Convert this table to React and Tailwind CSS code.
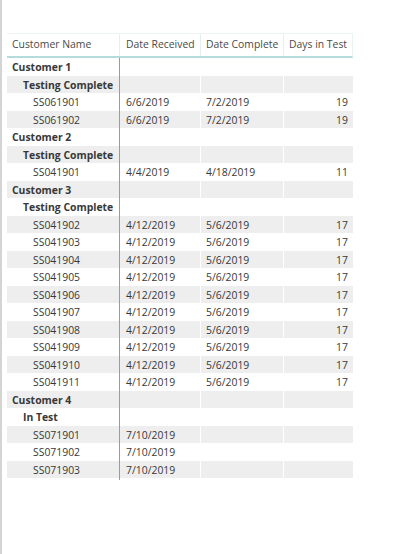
const rows = [
  { level: 0, name: 'Customer 1' },
  { level: 1, name: 'Testing Complete' },
  { level: 2, name: 'SS061901', received: '6/6/2019', complete: '7/2/2019', days: '19' },
  { level: 2, name: 'SS061902', received: '6/6/2019', complete: '7/2/2019', days: '19' },
  { level: 0, name: 'Customer 2' },
  { level: 1, name: 'Testing Complete' },
  { level: 2, name: 'SS041901', received: '4/4/2019', complete: '4/18/2019', days: '11' },
  { level: 0, name: 'Customer 3' },
  { level: 1, name: 'Testing Complete' },
  { level: 2, name: 'SS041902', received: '4/12/2019', complete: '5/6/2019', days: '17' },
  { level: 2, name: 'SS041903', received: '4/12/2019', complete: '5/6/2019', days: '17' },
  { level: 2, name: 'SS041904', received: '4/12/2019', complete: '5/6/2019', days: '17' },
  { level: 2, name: 'SS041905', received: '4/12/2019', complete: '5/6/2019', days: '17' },
  { level: 2, name: 'SS041906', received: '4/12/2019', complete: '5/6/2019', days: '17' },
  { level: 2, name: 'SS041907', received: '4/12/2019', complete: '5/6/2019', days: '17' },
  { level: 2, name: 'SS041908', received: '4/12/2019', complete: '5/6/2019', days: '17' },
  { level: 2, name: 'SS041909', received: '4/12/2019', complete: '5/6/2019', days: '17' },
  { level: 2, name: 'SS041910', received: '4/12/2019', complete: '5/6/2019', days: '17' },
  { level: 2, name: 'SS041911', received: '4/12/2019', complete: '5/6/2019', days: '17' },
  { level: 0, name: 'Customer 4' },
  { level: 1, name: 'In Test' },
  { level: 2, name: 'SS071901', received: '7/10/2019' },
  { level: 2, name: 'SS071902', received: '7/10/2019' },
  { level: 2, name: 'SS071903', received: '7/10/2019' },
]

const indent = ['pl-[5px] font-bold', 'pl-[16px] font-bold', 'pl-[26px]']

export default function App() {
  return (
    <div
      className="h-[554px] w-[405px] bg-white border-l-2 border-[#d4d4d4] pt-[33px] pl-[5px] text-[10.4px] text-[#383838]"
      style={{ fontFamily: '"Open Sans", "Noto Sans", sans-serif' }}
    >
      <div className="w-[346px]">
        {/* Header */}
        <div className="grid grid-cols-[113px_81px_83px_69px] h-[25px] border-t border-r border-[#ebf3f3] border-b-2 border-b-[#b5dcdc] text-[#4a4a4a]">
          <div className="flex items-center pl-[5px] border-r border-[#e6f0f0]">Customer Name</div>
          <div className="flex items-center pl-[6px] border-r border-[#e6f0f0]">Date Received</div>
          <div className="flex items-center pl-[5px] border-r border-[#e6f0f0]">Date Complete</div>
          <div className="flex items-center pl-[5px]">Days in Test</div>
        </div>

        {/* Rows */}
        {rows.map((row, i) => (
          <div
            key={i}
            className={`grid grid-cols-[113px_81px_83px_69px] h-[17.5px] leading-[19px] ${
              i % 2 === 1 ? 'bg-[#eeeeee]' : 'bg-white'
            }`}
          >
            <div className={`${indent[row.level]} border-r border-[#5fb6ae] whitespace-nowrap`}>
              {row.name}
            </div>
            <div className="pl-[6px] border-r border-white">{row.received}</div>
            <div className="pl-[5px] border-r border-white">{row.complete}</div>
            <div className="pr-[5px] text-right">{row.days}</div>
          </div>
        ))}
      </div>
    </div>
  )
}
